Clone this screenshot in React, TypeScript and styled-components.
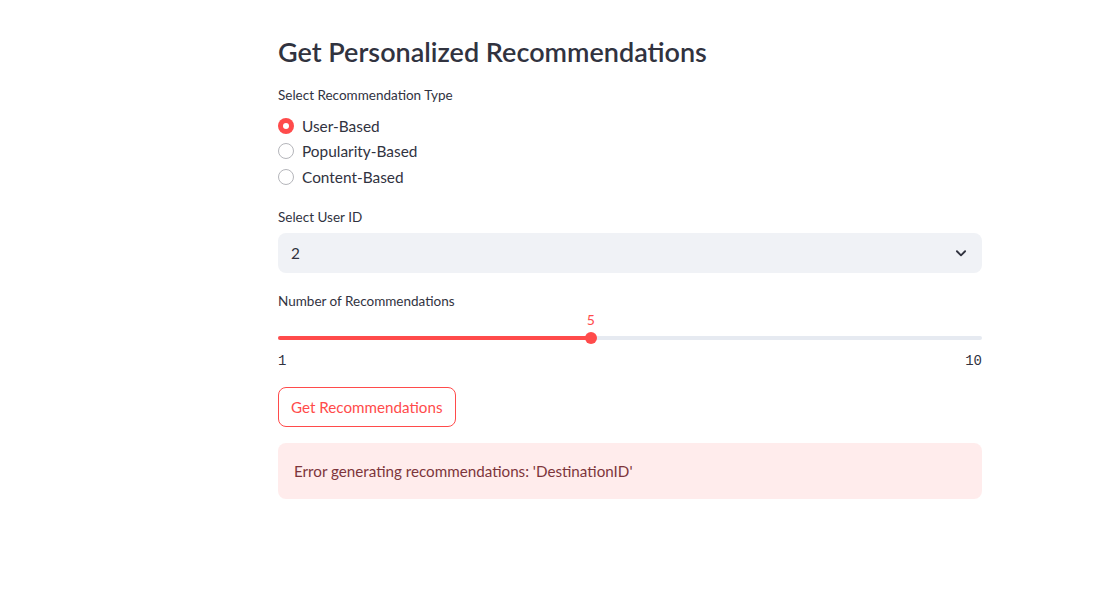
import React from "react";
import styled, { createGlobalStyle } from "styled-components";

const Global = createGlobalStyle`
  html, body { margin: 0; padding: 0; background: #ffffff; }
  body { font-family: Lato, "Noto Sans", sans-serif; color: rgb(49, 51, 63); }
  * { box-sizing: border-box; }
`;

const Page = styled.div`
  width: 1107px;
  height: 591px;
  overflow: hidden;
  padding: 37px 125px 0 278px;
`;

const Column = styled.div`
  width: 704px;
  display: flex;
  flex-direction: column;
`;

const Heading = styled.h3`
  margin: 0 0 19px 0;
  font-size: 27px;
  line-height: 30px;
  font-weight: 600;
  color: rgb(49, 51, 63);
`;

const Label = styled.div<{ $gap?: number }>`
  font-size: 13.5px;
  line-height: 18px;
  color: rgb(49, 51, 63);
  margin-bottom: ${(p) => (p.$gap ?? 8)}px;
`;

const RadioGroup = styled.div`
  display: flex;
  flex-direction: column;
  gap: 4px;
  padding-top: 3px;
  margin-bottom: 20px;
`;

const RadioRow = styled.label`
  display: flex;
  align-items: center;
  gap: 8px;
  height: 21.5px;
  font-size: 15.4px;
  color: rgb(49, 51, 63);
`;

const RadioDot = styled.span<{ $on?: boolean }>`
  width: 16px;
  height: 16px;
  border-radius: 50%;
  flex: none;
  background: ${(p) => (p.$on ? "#ff4b4b" : "#ffffff")};
  border: ${(p) => (p.$on ? "none" : "1px solid #b5b6bb")};
  display: flex;
  align-items: center;
  justify-content: center;
  &::after {
    content: "";
    width: 6px;
    height: 6px;
    border-radius: 50%;
    background: #ffffff;
    display: ${(p) => (p.$on ? "block" : "none")};
  }
`;

const Select = styled.div`
  height: 40px;
  border-radius: 8px;
  background: #f0f2f6;
  display: flex;
  align-items: center;
  justify-content: space-between;
  padding: 0 14px 0 13px;
  font-size: 15.4px;
  color: rgb(49, 51, 63);
  margin-bottom: 19px;
`;

const SliderWrap = styled.div`
  display: flex;
  flex-direction: column;
  margin-bottom: 17px;
`;

const ValueRow = styled.div`
  position: relative;
  height: 18px;
`;

const ThumbValue = styled.span`
  position: absolute;
  top: 0;
  transform: translateX(-50%);
  font-size: 14px;
  line-height: 18px;
  color: #ff4b4b;
`;

const Track = styled.div`
  position: relative;
  height: 4px;
  border-radius: 2px;
  background: #e6eaf1;
  margin-top: 7px;
`;

const Fill = styled.div`
  position: absolute;
  left: 0;
  top: 0;
  height: 4px;
  border-radius: 2px;
  background: #ff4b4b;
`;

const Thumb = styled.div`
  position: absolute;
  top: 50%;
  width: 12px;
  height: 12px;
  border-radius: 50%;
  background: #ff4b4b;
  transform: translate(-50%, -50%);
`;

const Ticks = styled.div`
  display: flex;
  justify-content: space-between;
  margin-top: 12px;
  font-family: "Liberation Mono", monospace;
  font-size: 14px;
  line-height: 18px;
  color: rgb(49, 51, 63);
`;

const Button = styled.button`
  align-self: flex-start;
  height: 40px;
  padding: 0 12px;
  border: 1px solid #ff4b4b;
  border-radius: 8px;
  background: #ffffff;
  color: #ff4b4b;
  font-family: inherit;
  font-size: 15.2px;
  margin-bottom: 16px;
`;

const Alert = styled.div`
  height: 56px;
  border-radius: 8px;
  background: rgba(255, 43, 43, 0.09);
  color: rgb(125, 53, 59);
  display: flex;
  align-items: center;
  padding: 0 16px;
  font-size: 15.2px;
`;

const Chevron = () => (
  <svg width="14" height="14" viewBox="0 0 24 24" fill="none" stroke="rgb(49,51,63)" strokeWidth="3.2" strokeLinecap="round" strokeLinejoin="round">
    <path d="M5 9l7 7 7-7" />
  </svg>
);

export default function App() {
  const min = 1;
  const max = 10;
  const value = 5;
  const pct = ((value - min) / (max - min)) * 100;
  const options = ["User-Based", "Popularity-Based", "Content-Based"];
  return (
    <Page>
      <Global />
      <Column>
        <Heading>Get Personalized Recommendations</Heading>
        <Label>Select Recommendation Type</Label>
        <RadioGroup>
          {options.map((o, i) => (
            <RadioRow key={o}>
              <RadioDot $on={i === 0} />
              {o}
            </RadioRow>
          ))}
        </RadioGroup>
        <Label $gap={7}>Select User ID</Label>
        <Select>
          <span>2</span>
          <Chevron />
        </Select>
        <Label $gap={1}>Number of Recommendations</Label>
        <SliderWrap>
          <ValueRow>
            <ThumbValue style={{ left: `${pct}%` }}>{value}</ThumbValue>
          </ValueRow>
          <Track>
            <Fill style={{ width: `${pct}%` }} />
            <Thumb style={{ left: `${pct}%` }} />
          </Track>
          <Ticks>
            <span>{min}</span>
            <span>{max}</span>
          </Ticks>
        </SliderWrap>
        <Button>Get Recommendations</Button>
        <Alert>Error generating recommendations: 'DestinationID'</Alert>
      </Column>
    </Page>
  );
}
